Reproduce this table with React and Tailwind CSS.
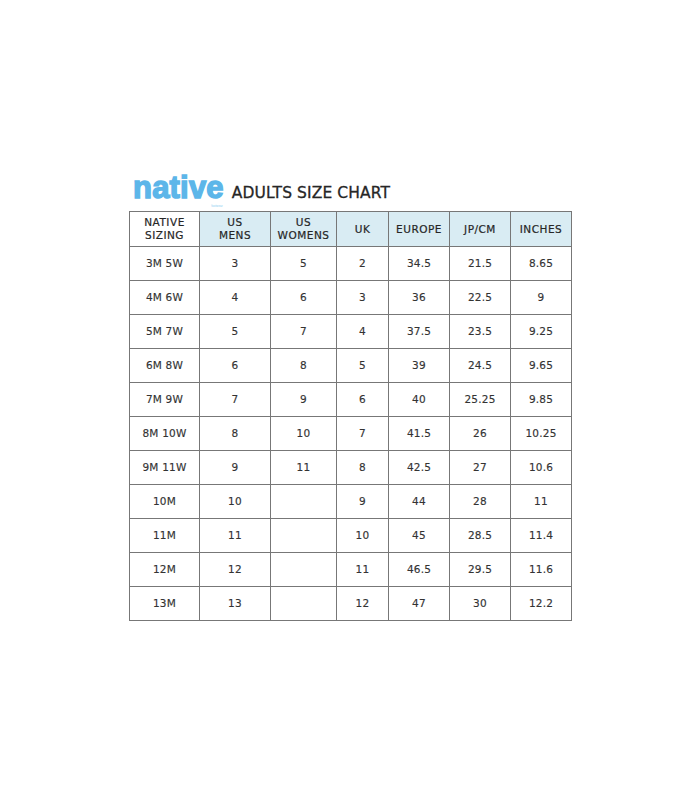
// App.jsx

import React from 'react';

const headers = [
  { label: ["NATIVE", "SIZING"], w: "w-[70px]", blue: false },
  { label: ["US", "MENS"], w: "w-[71px]", blue: true },
  { label: ["US", "WOMENS"], w: "w-[66px]", blue: true },
  { label: ["UK"], w: "w-[52px]", blue: true },
  { label: ["EUROPE"], w: "w-[61px]", blue: true },
  { label: ["JP/CM"], w: "w-[61px]", blue: true },
  { label: ["INCHES"], w: "w-[61px]", blue: true },
];

const rows = [
  ["3M 5W", "3", "5", "2", "34.5", "21.5", "8.65"],
  ["4M 6W", "4", "6", "3", "36", "22.5", "9"],
  ["5M 7W", "5", "7", "4", "37.5", "23.5", "9.25"],
  ["6M 8W", "6", "8", "5", "39", "24.5", "9.65"],
  ["7M 9W", "7", "9", "6", "40", "25.25", "9.85"],
  ["8M 10W", "8", "10", "7", "41.5", "26", "10.25"],
  ["9M 11W", "9", "11", "8", "42.5", "27", "10.6"],
  ["10M", "10", "", "9", "44", "28", "11"],
  ["11M", "11", "", "10", "45", "28.5", "11.4"],
  ["12M", "12", "", "11", "46.5", "29.5", "11.6"],
  ["13M", "13", "", "12", "47", "30", "12.2"],
];

const App = () => {
  return (
    <div className="w-[700px] h-[800px] bg-white font-['Liberation_Sans',Arial,sans-serif] text-[#333]">
      <div className="pt-[167px] pl-[129px] flex flex-col">

        {/* Logo + title */}
        <div className="flex items-end h-[41px] mb-[3px] pl-[4px]">
          <div className="flex flex-col items-end">
            <span className="block text-[31px] leading-none font-bold tracking-[0.2px] text-[#5cb6e9] [-webkit-text-stroke:1.4px_#5cb6e9]">
              native
            </span>
            <span className="block mt-[2px] pr-[1px] text-[3px] leading-[3px] text-[#8fcff2]">
              footwear
            </span>
          </div>
          <span className="ml-[8px] mb-[7px] text-[15.5px] leading-none tracking-[0.1px] text-[#262626] [-webkit-text-stroke:0.3px_#262626] font-['DejaVu_Sans',sans-serif]">
            ADULTS SIZE CHART
          </span>
        </div>

        {/* Table */}
        <table className="border-collapse w-[443px] border border-[#666] text-[10.5px] text-[#333] font-['DejaVu_Sans',sans-serif]">
          <thead>
            <tr className="h-[35px]">
              {headers.map((h, i) => (
                <th
                  key={i}
                  className={`${h.w} border border-[#777] font-normal text-center leading-[13px] tracking-[0.5px] text-[#262626] [-webkit-text-stroke:0.2px_#262626] ${h.blue ? 'bg-[#d9ecf3]' : 'bg-white'}`}
                >
                  {h.label.map((l, j) => (
                    <div key={j}>{l}</div>
                  ))}
                </th>
              ))}
            </tr>
          </thead>
          <tbody>
            {rows.map((r, i) => (
              <tr key={i} className="h-[34px]">
                {r.map((c, j) => (
                  <td key={j} className="border border-[#777] text-center tracking-[0.2px] [-webkit-text-stroke:0.15px_#333]">
                    {c}
                  </td>
                ))}
              </tr>
            ))}
          </tbody>
        </table>
      </div>
    </div>
  );
};

export default App;
